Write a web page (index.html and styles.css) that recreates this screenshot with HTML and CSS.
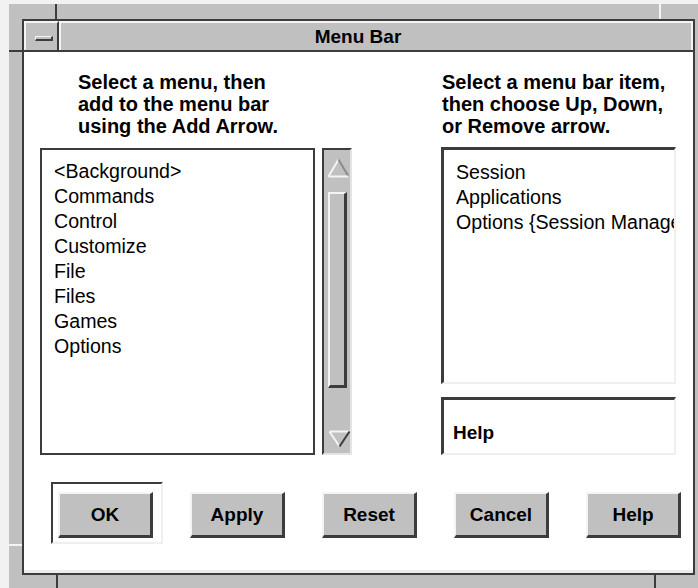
FILE: index.html
```html
<!DOCTYPE html>
<html lang="en">
<head>
<meta charset="UTF-8" />
<title>Menu Bar</title>
<link rel="stylesheet" href="styles.css">
</head>
<body>
  <div class="window">
    <span class="notch notch-tl-v"></span>
    <span class="notch notch-tl-h"></span>
    <span class="notch notch-tr-v"></span>
    <span class="notch notch-bl-h"></span>
    <span class="notch notch-bl-v"></span>
    <span class="notch notch-br-v"></span>

    <div class="frame">
      <div class="titlebar">
        <div class="tb-minimize"><span class="dash"></span></div>
        <div class="tb-title">Menu Bar</div>
      </div>

      <div class="content">
        <div class="panes">
          <div class="pane pane-left">
            <div class="hint hint-left">Select a menu, then<br>add to the menu bar<br>using the Add Arrow.</div>
            <div class="list-row">
              <ul class="list list-menus">
                <li>&lt;Background&gt;</li>
                <li>Commands</li>
                <li>Control</li>
                <li>Customize</li>
                <li>File</li>
                <li>Files</li>
                <li>Games</li>
                <li>Options</li>
              </ul>
              <div class="scrollbar">
                <svg class="arrow-up" width="23" height="20" viewBox="0 0 23 20">
                  <polygon points="1.5,18.5 11.5,1.5 21.5,18.5" fill="#c0c0c0" />
                  <polyline points="1.5,18.5 11.5,1.5" stroke="#f4f4f4" stroke-width="2" fill="none" />
                  <polyline points="11.5,1.5 21.5,18.5" stroke="#8a8a8a" stroke-width="2" fill="none" />
                  <polyline points="1.5,18.5 21.5,18.5" stroke="#f4f4f4" stroke-width="2" fill="none" />
                </svg>
                <div class="thumb"></div>
                <svg class="arrow-down" width="23" height="18" viewBox="0 0 23 18">
                  <polygon points="1.5,1.5 11.5,16.5 21.5,1.5" fill="#c0c0c0" />
                  <polyline points="1.5,1.5 21.5,1.5" stroke="#f4f4f4" stroke-width="2" fill="none" />
                  <polyline points="1.5,1.5 11.5,16.5" stroke="#f4f4f4" stroke-width="2" fill="none" />
                  <polyline points="11.5,16.5 21.5,1.5" stroke="#3c3c3c" stroke-width="2" fill="none" />
                </svg>
              </div>
            </div>
          </div>

          <div class="pane pane-right">
            <div class="hint hint-right">Select a menu bar item,<br>then choose Up, Down,<br>or Remove arrow.</div>
            <ul class="list list-bar">
              <li>Session</li>
              <li>Applications</li>
              <li>Options {Session Manager}</li>
            </ul>
            <div class="help-box">Help</div>
          </div>
        </div>

        <div class="actions">
          <div class="default-frame">
            <button class="btn">OK</button>
          </div>
          <button class="btn">Apply</button>
          <button class="btn">Reset</button>
          <button class="btn">Cancel</button>
          <button class="btn">Help</button>
        </div>
      </div>
    </div>
  </div>
</body>
</html>
```

FILE: styles.css
```css
/* Motif style dialog */
html, body {
  margin: 0;
  width: 698px;
  height: 588px;
  overflow: hidden;
  background: #f2f2f2;
  font-family: "Liberation Sans", Arial, sans-serif;
  color: #000;
}
.window {
  position: relative;
  margin: 4px 0 0 9px;
  width: 700px;
  height: 600px;
  padding: 15px 0 0 13px;
  box-sizing: border-box;
  background: #c0c0c0;
}
.notch {
  position: absolute;
  display: block;
}
.notch-tl-v { left: 46px; top: 0; width: 2px; height: 15px; background: #3c3c3c; }
.notch-tl-h { left: 0; top: 46px; width: 13px; height: 2px; background: #3c3c3c; }
.notch-tr-v { left: 650px; top: 0; width: 2px; height: 15px; background: #f4f4f4; }
.notch-bl-h { left: 0; top: 540px; width: 13px; height: 2px; background: #f4f4f4; }
.notch-bl-v { left: 47px; top: 571px; width: 2px; height: 20px; background: #3c3c3c; }
.notch-br-v { left: 645px; top: 571px; width: 2px; height: 20px; background: #3c3c3c; }

.frame {
  width: 673px;
  box-sizing: border-box;
  border: 2px solid #3c3c3c;
}
.titlebar {
  display: flex;
  height: 31px;
  box-sizing: border-box;
  border-bottom: 2px solid #3c3c3c;
}
.tb-minimize {
  width: 35px;
  box-sizing: border-box;
  padding: 13px 0 0 9px;
  border-top: 2px solid #f4f4f4;
  border-left: 2px solid #f4f4f4;
  border-right: 2px solid #3c3c3c;
}
.dash {
  display: block;
  width: 18px;
  height: 5px;
  box-sizing: border-box;
  background: #c0c0c0;
  border-top: 1px solid #f4f4f4;
  border-left: 1px solid #f4f4f4;
  border-right: 2px solid #3c3c3c;
  border-bottom: 2px solid #3c3c3c;
}
.tb-title {
  flex: 1;
  border-top: 2px solid #f4f4f4;
  border-left: 2px solid #f4f4f4;
  border-right: 2px solid #f4f4f4;
  padding-right: 36px;
  text-align: center;
  font-size: 19px;
  font-weight: bold;
  line-height: 27px;
}
.content {
  height: 521px;
  box-sizing: border-box;
  background: #fff;
  border-bottom: 3px solid #ececec;
  padding: 19px 0 0 16px;
}
.panes {
  display: flex;
}
.pane-left {
  width: 312px;
}
.pane-right {
  width: 235px;
  margin-left: 89px;
}
.hint {
  font-size: 20px;
  font-weight: bold;
  line-height: 22px;
}
.hint-left {
  padding-left: 38px;
}
.hint-right {
  padding-left: 1px;
}
.list {
  list-style: none;
  margin: 0;
  box-sizing: border-box;
  background: #fff;
  font-size: 19.6px;
  line-height: 25px;
  white-space: nowrap;
  overflow: hidden;
}
.list-row {
  display: flex;
  margin-top: 11px;
}
.list-menus {
  width: 275px;
  height: 307px;
  border: 2px solid #3c3c3c;
  padding: 9px 0 0 12px;
}
.scrollbar {
  display: flex;
  flex-direction: column;
  width: 30px;
  height: 307px;
  margin-left: 7px;
  box-sizing: border-box;
  background: #c0c0c0;
  border-top: 2px solid #3c3c3c;
  border-left: 2px solid #3c3c3c;
  border-right: 2px solid #e4e4e4;
  border-bottom: 2px solid #e4e4e4;
  padding: 8px 0 0 3px;
}
.scrollbar svg {
  display: block;
}
.thumb {
  width: 19px;
  height: 196px;
  margin: 14px 0 0 1px;
  box-sizing: border-box;
  border-top: 2px solid #f4f4f4;
  border-left: 2px solid #f4f4f4;
  border-right: 3px solid #3c3c3c;
  border-bottom: 3px solid #3c3c3c;
}
.arrow-down {
  margin: 42px 0 0 1px;
}
.list-bar {
  width: 235px;
  height: 237px;
  margin-top: 10px;
  border-top: 3px solid #3c3c3c;
  border-left: 3px solid #3c3c3c;
  border-right: 2px solid #efefef;
  border-bottom: 2px solid #efefef;
  padding: 10px 0 0 12px;
}
.help-box {
  height: 58px;
  margin-top: 13px;
  box-sizing: border-box;
  border-top: 3px solid #3c3c3c;
  border-left: 3px solid #3c3c3c;
  border-right: 2px solid #efefef;
  border-bottom: 2px solid #efefef;
  padding: 22px 0 0 9px;
  font-size: 19px;
  font-weight: bold;
  line-height: 22px;
}
.actions {
  display: flex;
  align-items: flex-start;
  gap: 37px;
  margin: 27px 0 0 11px;
}
.default-frame {
  border-top: 2px solid #3c3c3c;
  border-left: 2px solid #3c3c3c;
  border-right: 2px solid #efefef;
  border-bottom: 2px solid #efefef;
  padding: 8px 8px 4px 5px;
  margin-right: -10px;
}
.btn {
  display: block;
  width: 95px;
  height: 46px;
  margin: 10px 0 0 0;
  padding: 0;
  box-sizing: border-box;
  background: #c0c0c0;
  border-top: 2px solid #f4f4f4;
  border-left: 2px solid #f4f4f4;
  border-right: 3px solid #3c3c3c;
  border-bottom: 3px solid #3c3c3c;
  font-family: "Liberation Sans", Arial, sans-serif;
  font-size: 19px;
  font-weight: bold;
  color: #000;
}
.default-frame .btn {
  margin: 0;
}
```
